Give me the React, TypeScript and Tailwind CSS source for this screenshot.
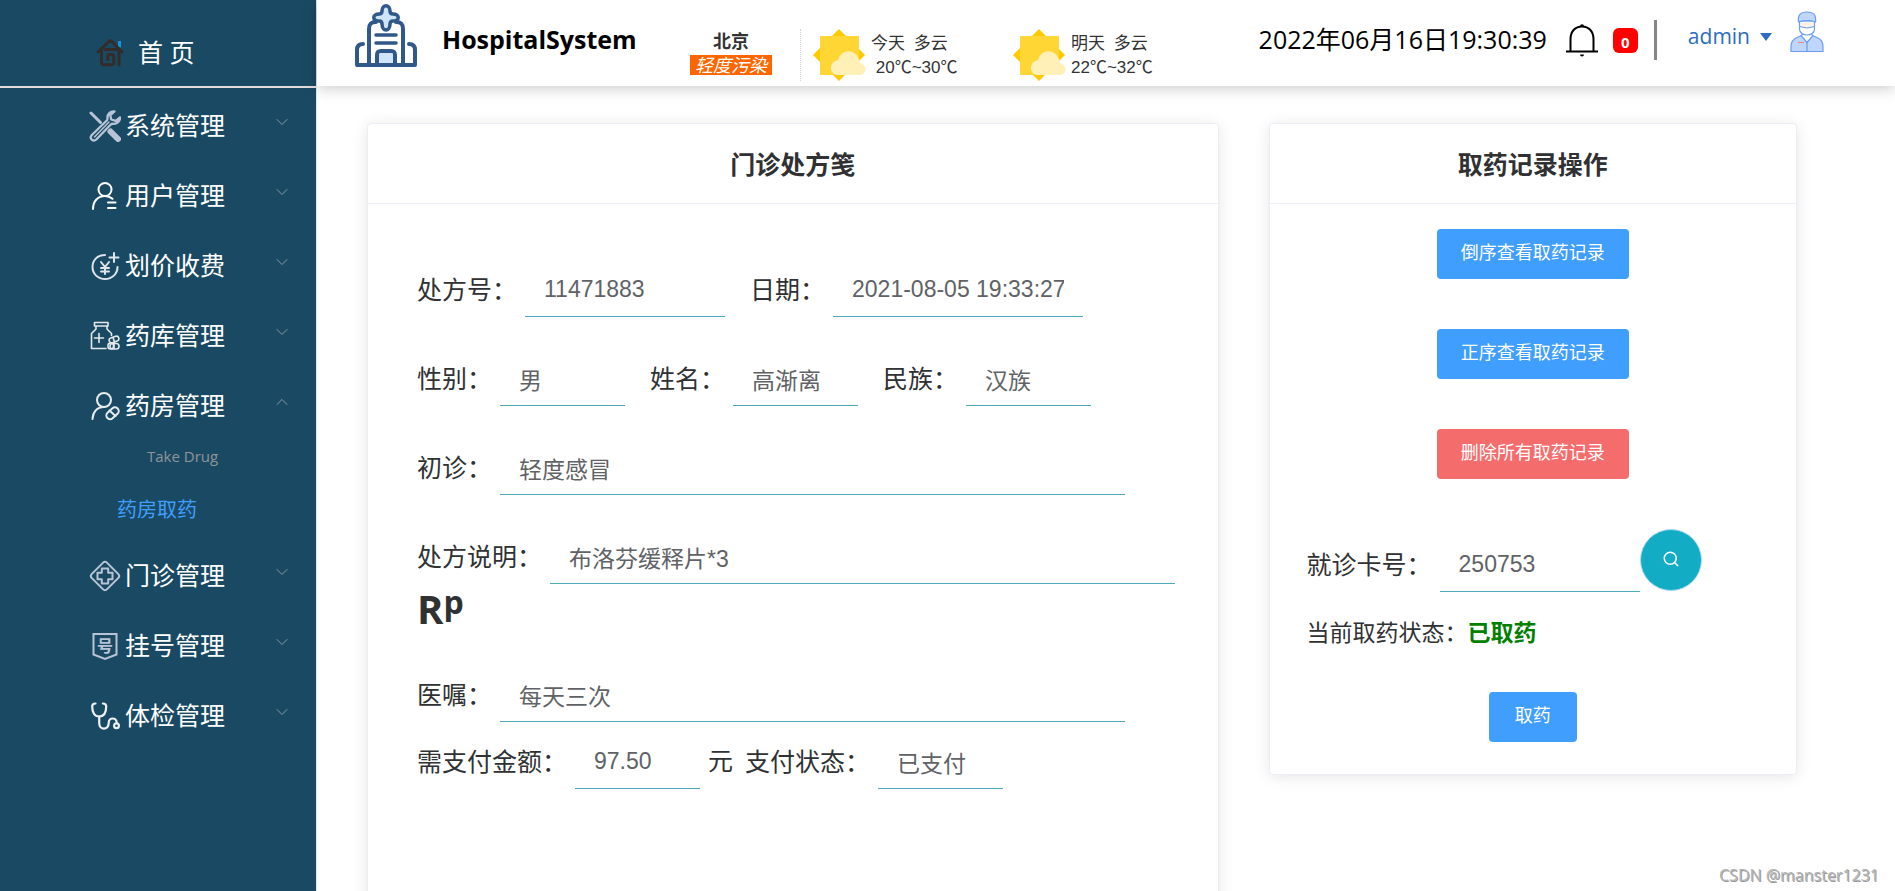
import type { ReactNode } from "react"
import { ChevronDown, ChevronUp, Search } from "lucide-react"

const HomeIcon = () => (
  <svg viewBox="0 0 28 28" className="size-7" fill="none" stroke="#332c2b" strokeWidth="3" strokeLinecap="round" strokeLinejoin="round">
    <path d="M23.500 2v6.500" stroke="#1296db" strokeLinecap="butt" />
    <path d="M2 13L13 2.500c.8-.7 2-.7 2.800 0L26 13" />
    <path d="M9 10.500h14V26" />
    <path d="M5.500 12v11.500c0 1.500.8 2.300 2.300 2.300h7.700c1.500 0 2.300-.8 2.300-2.300v-6c0-1.300-.8-2-2-2h-2c-1.300 0-2 .7-2 2v3" />
  </svg>
)

const ToolsIcon = () => (
  <svg viewBox="0 0 32 32" className="size-8" fill="none" stroke="#b8c4d6" strokeLinecap="round" strokeLinejoin="round">
    <path d="M2 3l9.500 9.500" strokeWidth="3" />
    <path d="M21.500 21.500l7.500 7.500" strokeWidth="6" />
    <path d="M25.500 1.500c-4-.5-7.500 2.500-7 7 0 1-.2 1.500-.7 2L2.800 25c-3 3.500 1.400 7.200 4.500 4.500L22 14.300c.6-.5 1.300-.6 2-.5 4 .4 7.300-2.500 7-6.300l-4.200 3.300-4.600-1.300-.9-4.300z" strokeWidth="2.300" />
    <path d="M5.500 27L20 12" strokeWidth="1.500" />
  </svg>
)

const UserIcon = () => (
  <svg viewBox="0 0 28 30" className="h-[30px] w-7" fill="none" stroke="#fff" strokeWidth="2" strokeLinecap="round">
    <circle cx="14" cy="8.500" r="6.500" />
    <path d="M2 28c0-8 5-13 12-13 3 0 5.500 1 7.500 2.800M17 21.500h7.500M17 27h7.500" />
  </svg>
)

const PriceIcon = () => (
  <svg viewBox="0 0 30 30" className="size-[30px]" fill="none" stroke="#dfe5ea" strokeWidth="2" strokeLinecap="round">
    <path d="M15 4C7.500 4 2.500 9 2.500 16S8 28 15 28s12.500-5 12.500-12" />
    <path d="M24 2v9M19.500 6.500h9M11 11l4 5 4-5M15 16v7M11 17h8M11 20.500h8" />
  </svg>
)

const StockIcon = () => (
  <svg viewBox="0 0 30 30" className="size-[30px]" fill="none" stroke="#e3e8ec" strokeWidth="1.600" strokeLinecap="round" strokeLinejoin="round">
    <path d="M4.500 1.500h13.500v3.500H4.500zM6 5v3l-4.500 4.500v15h14.500M17 5v3l4.500 4.500v2M9 12.500v9M4.500 17h9" />
    <rect x="19" y="16" width="10" height="5" rx="2.500" transform="rotate(-18 24 18.500)" />
    <rect x="18" y="22" width="5.500" height="6" rx="2.500" />
    <rect x="20" y="22.500" width="9" height="5.500" rx="2.700" />
    <path d="M23 16.500l1.500 4.500M24 22.500v5" />
  </svg>
)

const PharmacyIcon = () => (
  <svg viewBox="0 0 30 30" className="size-[30px]" fill="none" stroke="#e8ecef" strokeWidth="2" strokeLinecap="round">
    <circle cx="14" cy="9" r="7" />
    <path d="M2.500 28c.3-7 4.500-12 11.500-12" />
    <rect x="15.500" y="18.500" width="14" height="7.500" rx="3.700" transform="rotate(-42 22.500 22.200)" />
    <path d="M19.500 19.500l6 5.500" />
  </svg>
)

const ClinicIcon = () => (
  <svg viewBox="0 0 32 32" className="size-8" fill="none" stroke="#b8c4d6" strokeWidth="2" strokeLinejoin="round">
    <rect x="5.200" y="5.200" width="21.600" height="21.600" rx="3" transform="rotate(45 16 16)" />
    <path d="M12.800 8.500h6.400v4.300h4.300v6.400h-4.300v4.300h-6.400v-4.300H8.500v-6.400h4.300z" />
  </svg>
)

const RegisterIcon = () => (
  <svg viewBox="0 0 28 30" className="h-[30px] w-7" fill="none" stroke="#b8c4d6" strokeWidth="2">
    <path d="M2.500 3h23v20.500L14 28 2.500 23.500z" />
    <text x="14" y="21" textAnchor="middle" fontSize="16" fontWeight="700" fill="#b8c4d6" stroke="none" fontFamily="'Noto Sans CJK SC', sans-serif">号</text>
  </svg>
)

const StethoscopeIcon = () => (
  <svg viewBox="0 0 30 30" className="size-[30px]" fill="none" stroke="#eef1f3" strokeWidth="2.200" strokeLinecap="round">
    <path d="M5.500 2.500C3 2.500 2.200 3.500 2.200 5.500c0 6 2.300 10 7 10s7-4 7-10c0-2-.8-3-3.300-3" />
    <path d="M9.200 15.500V22c0 7.500 9.500 7.500 9.500 0 0-6 8-6 8 0" />
    <circle cx="26.500" cy="24.800" r="2.400" />
  </svg>
)

const HospitalLogo = () => (
  <svg viewBox="0 0 62 64" className="h-16 w-[62px]" fill="none" stroke="#30588a" strokeWidth="4" strokeLinecap="round" strokeLinejoin="round">
    <path d="M14 61V25c0-5 2-7 7-7M48 61V25c0-5-2-7-7-7" />
    <path d="M8 40c-4 0-6 2-6 6v15h58V46c0-4-2-6-6-6" />
    <path d="M27 7c0-7 8-7 8 0 0 2 1 3 3 3 7 0 7 7 0 7-2 0-3 1-3 3 0 8-8 8-8 0 0-2-1-3-3-3-7 0-7-7 0-7 2 0 3-1 3-3z" fill="#cfe6fa" strokeWidth="3.500" />
    <path d="M21 31h20M21 39h20" strokeWidth="3.500" />
    <path d="M22 61V51c0-3 1-4 4-4h10c3 0 4 1 4 4v10z" fill="#cfe6fa" />
  </svg>
)

const SunIcon = () => (
  <svg viewBox="0 0 54 52" className="h-[52px] w-[54px] shrink-0">
    <path d="M26 0l26 26-26 26L0 26z" fill="#ffc900" />
    <rect x="7" y="7" width="39" height="39" rx="1" fill="#ffd633" />
    <path d="M25 46c-9 0-10-13 0-15 4-13 20-11 22 3 8 2 7 12-1 12z" fill="#fff0b8" />
  </svg>
)

const BellIcon = () => (
  <svg viewBox="0 0 34 34" className="size-[34px]" fill="none" stroke="#000" strokeWidth="2">
    <path d="M1 28.500h32M5.500 28V16C5.500 8 10.500 3.500 17 3.500S28.500 8 28.500 16v12" />
    <path d="M15 3.200a2 2 0 014 0zM15 31.500h4a2 2 0 01-4 0z" fill="#000" stroke="none" />
  </svg>
)

const DoctorIcon = () => (
  <svg viewBox="0 0 34 42" className="h-[42px] w-[34px]" fill="#bfd6ff" stroke="#6a9df2" strokeWidth="1.200" strokeLinejoin="round">
    <path d="M1 40.500V36c0-5 2-8 6-9.500l6-2.500h8l6 2.500c4 1.500 6 4.500 6 9.500v4.500z" />
    <path d="M11 24.500l6 7 6-7-3-2h-6z" fill="#fff" />
    <path d="M9.500 10v5c0 6 3.500 8.500 7.500 8.500s7.500-2.500 7.500-8.500v-5z" fill="#fff3e8" />
    <path d="M9.500 15.500L17 17l7.500-1.500V18c0 4-4 6-7.500 6s-7.500-2-7.500-6z" fill="#fff" />
    <path d="M8.500 11c-1-7 2-10 8.500-10s9.500 3 8.500 10c-5-1.500-12-1.500-17 0z" />
    <path d="M17 31.500V40" />
    <path d="M8 31.500h6" stroke="#f28c8c" />
  </svg>
)

interface MenuRow {
  label: string
  icon: ReactNode
  open?: boolean
}

const menu: MenuRow[] = [
  { label: "系统管理", icon: <ToolsIcon /> },
  { label: "用户管理", icon: <UserIcon /> },
  { label: "划价收费", icon: <PriceIcon /> },
  { label: "药库管理", icon: <StockIcon /> },
  { label: "药房管理", icon: <PharmacyIcon />, open: true },
  { label: "门诊管理", icon: <ClinicIcon /> },
  { label: "挂号管理", icon: <RegisterIcon /> },
  { label: "体检管理", icon: <StethoscopeIcon /> },
]

function Sidebar() {
  return (
    <aside className="w-[317px] shrink-0 border-r border-gray-200 bg-[#1a4a63]">
      <a href="#" className="flex h-[88px] items-center gap-3.5 border-b-2 border-[#e4dcdc] pt-5 pl-24 text-[25px] text-white">
        <HomeIcon />
        <span>首 页</span>
      </a>
      <ul className="pt-0.5">
        {menu.map((m) => (
          <li key={m.label}>
            <button className="flex h-[70px] w-full items-center pt-0.5 pr-6 pl-[89px] text-[25px] text-white">
              <span className="mr-1 flex w-8 justify-center">{m.icon}</span>
              <span>{m.label}</span>
              <span className="ml-auto pb-2 text-[#a3a6ad]">
                {m.open ? <ChevronUp className="size-5" strokeWidth={1} /> : <ChevronDown className="size-5" strokeWidth={1} />}
              </span>
            </button>
            {m.open && (
              <div className="flex h-[100px] flex-col">
                <p className="pt-1 pl-[147px] text-[15px] leading-6 text-[#909399]">Take Drug</p>
                <a href="#" className="mt-7 pl-[117px] text-[20px] leading-7 text-[#409eff]">药房取药</a>
              </div>
            )}
          </li>
        ))}
      </ul>
    </aside>
  )
}

function Forecast({ day, temp }: { day: string; temp: string }) {
  return (
    <div className="flex w-[200px] items-center gap-1">
      <SunIcon />
      <div className="text-[17px] leading-[25px] whitespace-pre text-[#333]">
        <p>{day}</p>
        <p className="font-['Liberation_Sans','Noto_Sans_CJK_SC',sans-serif]">{temp}</p>
      </div>
    </div>
  )
}

function Header() {
  return (
    <header className="z-10 flex h-[86px] shrink-0 items-center bg-white pr-[71px] pb-1.5 pl-[38px] shadow-[0_2px_14px_rgba(0,0,0,0.22)]">
      <div className="pb-2">
        <HospitalLogo />
      </div>
      <h1 className="ml-[25px] w-[248px] text-[25px] font-bold text-black">HospitalSystem</h1>

      {/* Weather */}
      <div className="flex items-center pt-[30px]">
        <div className="flex w-[82px] flex-col items-center pb-1 text-[18px] leading-5 text-[#333]">
          <span className="pb-1 font-bold">北京</span>
          <em className="w-full bg-[#ff6600] text-center text-white">轻度污染</em>
        </div>
        <div className="ml-7 flex border-l border-dotted border-gray-300 pl-3">
          <Forecast day="今天  多云" temp=" 20℃~30℃" />
          <Forecast day="明天  多云" temp="22℃~32℃" />
        </div>
      </div>

      {/* Clock, messages and account */}
      <div className="ml-auto flex items-center">
        <time className="text-[25px] whitespace-nowrap text-black">2022年06月16日19:30:39</time>
        <button className="ml-[18px] flex items-center gap-3.5" aria-label="消息">
          <BellIcon />
          <span className="flex h-[25px] w-[25px] items-center justify-center rounded-md bg-[#ff0000] pt-1 text-[15px] font-bold text-white">0</span>
        </button>
        <span className="ml-4 h-10 w-[3px] bg-[#85858a]" />
        <button className="ml-[31px] flex items-center gap-2.5 pb-1.5 text-[21px] text-[#2e6dbb]">
          admin
          <svg viewBox="0 0 12 8" className="h-2 w-3">
            <path d="M0 0h12L6 8z" fill="#2e6dbb" />
          </svg>
        </button>
        <div className="ml-[18px] pb-4">
          <DoctorIcon />
        </div>
      </div>
    </header>
  )
}

interface FieldProps {
  id: string
  label: string
  value: string
  width: string
}

function Field({ id, label, value, width }: FieldProps) {
  return (
    <div className="flex items-center gap-2">
      <label htmlFor={id} className="pb-1.5 text-[25px] leading-[44px] whitespace-nowrap">{label}</label>
      <input
        id={id}
        defaultValue={value}
        className={`h-[50px] border-b border-[#4fa9b8] bg-transparent px-[19px] pb-1 font-['Liberation_Sans','Noto_Sans_CJK_SC',sans-serif] text-[23px] text-[#606266] outline-none ${width}`}
      />
    </div>
  )
}

function Card({ title, className, children }: { title: string; className: string; children: ReactNode }) {
  return (
    <section className={`rounded border border-[#ebeef5] bg-white shadow-[0_2px_15px_rgba(0,0,0,0.1)] ${className}`}>
      <h2 className="flex h-20 items-center justify-center border-b border-[#ebeef5] pt-0.5 text-[25px] font-bold">{title}</h2>
      {children}
    </section>
  )
}

function Prescription() {
  return (
    <Card title="门诊处方笺" className="h-[1000px] flex-[852]">
      <div className="pt-[63px] pr-8 pl-[49px]">
        <div className="flex flex-col gap-[39px]">
          <div className="flex gap-[25px]">
            <Field id="no" label="处方号：" value="11471883" width="w-[200px]" />
            <Field id="date" label="日期：" value="2021-08-05 19:33:27" width="w-[250px]" />
          </div>
          <div className="flex gap-[25px]">
            <Field id="sex" label="性别：" value="男" width="w-[125px]" />
            <Field id="name" label="姓名：" value="高渐离" width="w-[125px]" />
            <Field id="nation" label="民族：" value="汉族" width="w-[125px]" />
          </div>
          <Field id="diagnosis" label="初诊：" value="轻度感冒" width="w-[625px]" />
          <Field id="desc" label="处方说明：" value="布洛芬缓释片*3" width="w-[625px]" />
        </div>

        <p className="flex h-[88px] items-start text-[40px] leading-[50px] font-bold">
          R<span className="text-[32px] leading-9">p</span>
        </p>

        <Field id="advice" label="医嘱：" value="每天三次" width="w-[625px]" />
        <div className="mt-[17px] flex items-center">
          <Field id="amount" label="需支付金额：" value="97.50" width="w-[125px]" />
          <span className="mr-3 ml-2 pb-1.5 text-[25px]">元</span>
          <Field id="paid" label="支付状态：" value="已支付" width="w-[125px]" />
        </div>
      </div>
    </Card>
  )
}

function DrugActions() {
  return (
    <Card title="取药记录操作" className="flex-[528]">
      <div className="flex flex-col items-center gap-[50px] pt-[25px] text-[18px] text-white">
        <button className="h-[50px] w-48 rounded bg-[#409eff] pb-1">倒序查看取药记录</button>
        <button className="h-[50px] w-48 rounded bg-[#409eff] pb-1">正序查看取药记录</button>
        <button className="h-[50px] w-48 rounded bg-[#f56c6c] pb-1">删除所有取药记录</button>
      </div>
      <div className="mt-[50px] flex pl-[37px]">
        <div className="pt-[13px]">
          <Field id="card" label="就诊卡号：" value="250753" width="w-[200px]" />
        </div>
        <button aria-label="查询" className="flex size-[62px] items-center justify-center rounded-full border border-[#b3d8ff] bg-[#12adc5] pb-0.5 text-white">
          <Search className="size-[18px]" strokeWidth={2} />
        </button>
      </div>
      <p className="mt-[22px] pl-[37px] text-[23px] leading-9">
        当前取药状态：<b className="text-[#008000]">已取药</b>
      </p>
      <div className="flex justify-center pt-[42px] pb-8">
        <button className="h-[50px] w-22 rounded bg-[#409eff] pb-1 text-[18px] text-white">取药</button>
      </div>
    </Card>
  )
}

export default function App() {
  return (
    <div className="flex h-screen overflow-hidden bg-white font-['Open_Sans','Noto_Sans_CJK_SC',sans-serif] text-[#303133]">
      <Sidebar />
      <div className="flex min-w-0 flex-1 flex-col">
        <Header />
        <main className="flex min-h-0 flex-1 items-start gap-[50px] overflow-hidden pt-[37px] pr-[98px] pl-[50px]">
          <Prescription />
          <DrugActions />
        </main>
      </div>
      <span className="absolute right-4 bottom-1 text-[16px] leading-6 text-[#b4b4b4] [text-shadow:1px_1px_0_#999]">CSDN @manster1231</span>
    </div>
  )
}
